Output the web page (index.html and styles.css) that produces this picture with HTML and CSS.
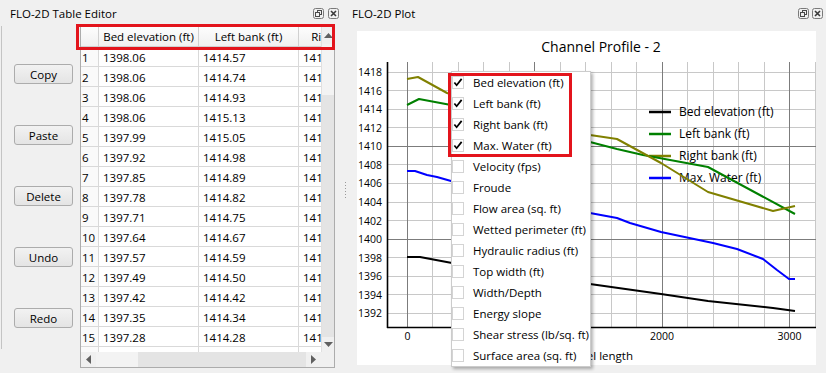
FILE: index.html
```html
<!DOCTYPE html>
<html lang="en">
<head>
  <meta charset="UTF-8">
  <title>FLO-2D Table Editor / Plot</title>
  <link rel="stylesheet" href="styles.css">
</head>
<body>

  <div class="dock dock-table">
    <div class="dock-title">
      <span>FLO-2D Table Editor</span>
      <div class="dock-btns">
        <svg width="11" height="11" viewBox="0 0 11 11"><rect x="0.5" y="0.5" width="10" height="10" rx="2" fill="none" stroke="#7a7a7a"/><rect x="4.5" y="2.5" width="4" height="4" fill="none" stroke="#4a4a4a"/><rect x="2.5" y="4.5" width="4" height="4" fill="#f0f0f0" stroke="#4a4a4a"/></svg>
        <svg width="11" height="11" viewBox="0 0 11 11"><rect x="0.5" y="0.5" width="10" height="10" rx="2" fill="none" stroke="#7a7a7a"/><path d="M3 3L8 8M8 3L3 8" stroke="#3a3a3a" stroke-width="1.6"/></svg>
      </div>
    </div>
    <div class="dock-body">
      <div class="tools">
        <button>Copy</button>
        <button>Paste</button>
        <button>Delete</button>
        <button>Undo</button>
        <button>Redo</button>
      </div>

      <div class="tablebox">
        <div class="viewport">
          <div class="row head">
            <div class="cell"></div>
            <div class="cell">Bed elevation (ft)</div>
            <div class="cell">Left bank (ft)</div>
            <div class="cell">Right bank (ft)</div>
          </div>
          <div class="row"><div class="cell num">1</div><div class="cell">1398.06</div><div class="cell">1414.57</div><div class="cell">1417.27</div></div>
          <div class="row"><div class="cell num">2</div><div class="cell">1398.06</div><div class="cell">1414.74</div><div class="cell">1417.41</div></div>
          <div class="row"><div class="cell num">3</div><div class="cell">1398.06</div><div class="cell">1414.93</div><div class="cell">1417.55</div></div>
          <div class="row"><div class="cell num">4</div><div class="cell">1398.06</div><div class="cell">1415.13</div><div class="cell">1417.68</div></div>
          <div class="row"><div class="cell num">5</div><div class="cell">1397.99</div><div class="cell">1415.05</div><div class="cell">1417.52</div></div>
          <div class="row"><div class="cell num">6</div><div class="cell">1397.92</div><div class="cell">1414.98</div><div class="cell">1417.36</div></div>
          <div class="row"><div class="cell num">7</div><div class="cell">1397.85</div><div class="cell">1414.89</div><div class="cell">1416.98</div></div>
          <div class="row"><div class="cell num">8</div><div class="cell">1397.78</div><div class="cell">1414.82</div><div class="cell">1416.71</div></div>
          <div class="row"><div class="cell num">9</div><div class="cell">1397.71</div><div class="cell">1414.75</div><div class="cell">1416.44</div></div>
          <div class="row"><div class="cell num">10</div><div class="cell">1397.64</div><div class="cell">1414.67</div><div class="cell">1416.17</div></div>
          <div class="row"><div class="cell num">11</div><div class="cell">1397.57</div><div class="cell">1414.59</div><div class="cell">1415.90</div></div>
          <div class="row"><div class="cell num">12</div><div class="cell">1397.49</div><div class="cell">1414.50</div><div class="cell">1415.62</div></div>
          <div class="row"><div class="cell num">13</div><div class="cell">1397.42</div><div class="cell">1414.42</div><div class="cell">1415.35</div></div>
          <div class="row"><div class="cell num">14</div><div class="cell">1397.35</div><div class="cell">1414.34</div><div class="cell">1415.08</div></div>
          <div class="row"><div class="cell num">15</div><div class="cell">1397.28</div><div class="cell">1414.28</div><div class="cell">1414.81</div></div>
          <div class="row"><div class="cell num"></div><div class="cell"></div><div class="cell"></div><div class="cell"></div></div>
        </div>

        <div class="vscroll">
          <div class="sb-btn"><svg width="9" height="5" viewBox="0 0 9 5"><path d="M0 5L4.5 0L9 5Z" fill="#606060"/></svg></div>
          <div class="sb-thumb"></div>
          <div class="sb-track"></div>
          <div class="sb-btn"><svg width="9" height="5" viewBox="0 0 9 5"><path d="M0 0L4.5 5L9 0Z" fill="#606060"/></svg></div>
        </div>
        <div class="hscroll">
          <div class="sb-btn"><svg width="5" height="9" viewBox="0 0 5 9"><path d="M5 0L0 4.5L5 9Z" fill="#606060"/></svg></div>
          <div class="sb-thumb"></div>
          <div class="sb-track"></div>
          <div class="sb-btn"><svg width="5" height="9" viewBox="0 0 5 9"><path d="M0 0L5 4.5L0 9Z" fill="#606060"/></svg></div>
        </div>
        <div class="corner"></div>

        <div class="mark mark-head"></div>
      </div>
    </div>
  </div>

  <div class="splitter"><div class="grip"></div></div>

  <div class="dock dock-plot">
    <div class="dock-title">
      <span>FLO-2D Plot</span>
      <div class="dock-btns">
        <svg width="11" height="11" viewBox="0 0 11 11"><rect x="0.5" y="0.5" width="10" height="10" rx="2" fill="none" stroke="#7a7a7a"/><rect x="4.5" y="2.5" width="4" height="4" fill="none" stroke="#4a4a4a"/><rect x="2.5" y="4.5" width="4" height="4" fill="#f0f0f0" stroke="#4a4a4a"/></svg>
        <svg width="11" height="11" viewBox="0 0 11 11"><rect x="0.5" y="0.5" width="10" height="10" rx="2" fill="none" stroke="#7a7a7a"/><path d="M3 3L8 8M8 3L3 8" stroke="#3a3a3a" stroke-width="1.6"/></svg>
      </div>
    </div>

    <div class="plot">
      <svg class="chart" width="459" height="334" viewBox="0 0 459 334">
        <defs>
          <clipPath id="below-menu"><rect x="234" y="310" width="225" height="24"/></clipPath>
        </defs>
        <text class="title" x="244" y="16" dy=".35em">Channel Profile - 2</text>

        <!-- minor grid -->
        <g stroke="#c8c8c8" stroke-width="1">
          <path d="M75.5 31V296M101.5 31V296M126.5 31V296M152.5 31V296M203.5 31V296M228.5 31V296M254.5 31V296M279.5 31V296M330.5 31V296M356.5 31V296M381.5 31V296M407.5 31V296M458.5 31V296"/>
          <path d="M30 282.5H459M30 263.5H459M30 245.5H459M30 226.5H459M30 189.5H459M30 171.5H459M30 152.5H459M30 133.5H459M30 96.5H459M30 78.5H459M30 59.5H459M30 41.5H459"/>
        </g>
        <!-- major grid -->
        <g stroke="#7c7c7c" stroke-width="1">
          <path d="M50.5 31V296M177.5 31V296M305.5 31V296M432.5 31V296"/>
          <path d="M30 208.5H459M30 115.5H459"/>
        </g>
        <!-- axes -->
        <path d="M30.5 31V297M30 296.5H459" stroke="#000" stroke-width="1.6" fill="none"/>

        <g class="ylab">
          <text x="25" y="41" dy=".35em">1418</text>
          <text x="25" y="60" dy=".35em">1416</text>
          <text x="25" y="78" dy=".35em">1414</text>
          <text x="25" y="97" dy=".35em">1412</text>
          <text x="25" y="115" dy=".35em">1410</text>
          <text x="25" y="134" dy=".35em">1408</text>
          <text x="25" y="152" dy=".35em">1406</text>
          <text x="25" y="171" dy=".35em">1404</text>
          <text x="25" y="190" dy=".35em">1402</text>
          <text x="25" y="208" dy=".35em">1400</text>
          <text x="25" y="227" dy=".35em">1398</text>
          <text x="25" y="245" dy=".35em">1396</text>
          <text x="25" y="264" dy=".35em">1394</text>
          <text x="25" y="282" dy=".35em">1392</text>
        </g>
        <g class="xlab">
          <text x="50.5" y="305" dy=".35em">0</text>
          <text x="305" y="305" dy=".35em">2000</text>
          <text x="432.5" y="305" dy=".35em">3000</text>
        </g>
        <text class="xtitle" x="276" y="325" dy=".35em" clip-path="url(#below-menu)">Channel length</text>

        <!-- legend -->
        <g stroke-width="2.5">
          <path d="M292 81H314" stroke="#000"/>
          <path d="M292 103H314" stroke="#008000"/>
          <path d="M292 125H314" stroke="#808000"/>
          <path d="M292 147H314" stroke="#0000ff"/>
        </g>
        <g class="legend">
          <text x="322" y="81" dy=".35em">Bed elevation (ft)</text>
          <text x="322" y="103" dy=".35em">Left bank (ft)</text>
          <text x="322" y="125" dy=".35em">Right bank (ft)</text>
          <text x="322" y="147" dy=".35em">Max. Water (ft)</text>
        </g>

        <!-- series -->
        <g fill="none" stroke-width="2" stroke-linejoin="round">
          <polyline stroke="#000" points="50,226 63,226 95,232 160,243 233,253 304,263 351,270 416,277 438,280"/>
          <polyline stroke="#008000" points="50,74 62,68 94,74 160,92 233,111 260,118 286,124 351,136 438,183"/>
          <polyline stroke="#808000" points="50,48 61,46 90,62 160,84 233,104 260,108 304,132 351,161 416,180 438,175"/>
          <polyline stroke="#0000ff" points="50,140 58,140 70,144 80,146 94,150 160,166 233,182 260,187 273,192 304,201 356,212 380,218 406,228 420,239 432,248 438,248"/>
        </g>
      </svg>

      <div class="menu">
        <div class="item"><span class="box"><svg width="11" height="11" viewBox="0 0 11 11"><path d="M1.5 5.5L4 8.5L9.5 1.5" fill="none" stroke="#000" stroke-width="1.9"/></svg></span>Bed elevation (ft)</div>
        <div class="item"><span class="box"><svg width="11" height="11" viewBox="0 0 11 11"><path d="M1.5 5.5L4 8.5L9.5 1.5" fill="none" stroke="#000" stroke-width="1.9"/></svg></span>Left bank (ft)</div>
        <div class="item"><span class="box"><svg width="11" height="11" viewBox="0 0 11 11"><path d="M1.5 5.5L4 8.5L9.5 1.5" fill="none" stroke="#000" stroke-width="1.9"/></svg></span>Right bank (ft)</div>
        <div class="item"><span class="box"><svg width="11" height="11" viewBox="0 0 11 11"><path d="M1.5 5.5L4 8.5L9.5 1.5" fill="none" stroke="#000" stroke-width="1.9"/></svg></span>Max. Water (ft)</div>
        <div class="item"><span class="box"></span>Velocity (fps)</div>
        <div class="item"><span class="box"></span>Froude</div>
        <div class="item"><span class="box"></span>Flow area (sq. ft)</div>
        <div class="item"><span class="box"></span>Wetted perimeter (ft)</div>
        <div class="item"><span class="box"></span>Hydraulic radius (ft)</div>
        <div class="item"><span class="box"></span>Top width (ft)</div>
        <div class="item"><span class="box"></span>Width/Depth</div>
        <div class="item"><span class="box"></span>Energy slope</div>
        <div class="item"><span class="box"></span>Shear stress (lb/sq. ft)</div>
        <div class="item"><span class="box"></span>Surface area (sq. ft)</div>
        <div class="mark mark-menu"></div>
      </div>
    </div>
  </div>

</body>
</html>
```

FILE: styles.css
```css
* {
  box-sizing: border-box;
}
body {
  margin: 0;
  width: 826px;
  height: 373px;
  overflow: hidden;
  display: flex;
  background-color: #f0f0f0;
  color: #000;
  font-family: "Open Sans", "Noto Sans", sans-serif;
  font-size: 11.5px;
}
.dock {
  display: flex;
  flex-direction: column;
}
.dock-table {
  width: 340px;
}
.dock-plot {
  flex: 1;
}
.dock-title {
  height: 26px;
  display: flex;
  align-items: center;
  justify-content: space-between;
  padding: 0 1px 0 10px;
}
.dock-plot .dock-title {
  padding: 0 3px 0 2px;
}
.dock-btns {
  display: flex;
  gap: 4px;
}
.dock-plot .dock-btns {
  gap: 3px;
}
.dock-btns svg {
  display: block;
}
.dock-body {
  display: flex;
  flex: 1;
}

/* buttons */
.tools {
  width: 79px;
  height: 323px;
  margin-left: 1px;
  border-left: 1px solid #c4c4c4;
  display: flex;
  flex-direction: column;
  align-items: flex-start;
  gap: 41px;
  padding: 38px 0 0 12px;
}
button {
  width: 59px;
  height: 20px;
  padding: 0;
  font-family: inherit;
  font-size: 11.5px;
  color: #000;
  background: linear-gradient(#f2f2f2, #e4e4e4);
  border: 1px solid #acacac;
  border-radius: 3px;
}

/* table widget */
.tablebox {
  position: relative;
  width: 255px;
  height: 342px;
  border: 1px solid #acacac;
  display: grid;
  grid-template-columns: 240px 13px;
  grid-template-rows: 325px 15px;
  background-color: #fff;
}
.viewport {
  overflow: hidden;
}
.row {
  display: grid;
  grid-template-columns: 18px 100px 100px 100px;
  height: 20px;
}
.cell {
  border-right: 1px solid #d9d9d9;
  border-bottom: 1px solid #d9d9d9;
  padding: 1px 0 0 4px;
  line-height: 19px;
  white-space: nowrap;
  overflow: hidden;
}
.cell.num {
  padding-left: 1px;
  background-color: #fafafa;
}
.head .cell {
  text-align: center;
  padding: 0;
  line-height: 20px;
  background: linear-gradient(#fdfdfd, #f0f0f0);
  border-right-color: #d0d0d0;
  border-bottom-color: #d0d0d0;
}

.vscroll,
.hscroll {
  display: flex;
  background-color: #f0f0f0;
}
.vscroll {
  flex-direction: column;
  border-left: 1px solid #e0e0e0;
}
.sb-btn {
  display: flex;
  align-items: center;
  justify-content: center;
  flex: 0 0 17px;
}
.hscroll .sb-btn {
  flex-basis: 15px;
}
.sb-thumb {
  flex: 0 0 51px;
  background-color: #f3f3f3;
}
.hscroll .sb-thumb {
  flex-basis: 42px;
}
.sb-track {
  flex: 1;
  background-color: #e4e4e4;
}
.vscroll .sb-btn:last-child {
  flex-basis: 15px;
}
.corner {
  background-color: #f0f0f0;
}

/* red highlight frames */
.mark {
  position: absolute;
  border: 3px solid #e3141c;
}
.mark-head {
  left: -5px;
  top: -3px;
  width: 259px;
  height: 26px;
}
.mark-menu {
  left: -4px;
  top: 1px;
  width: 124px;
  height: 84px;
}

/* splitter */
.splitter {
  width: 10px;
  display: flex;
  justify-content: center;
  padding-top: 182px;
}
.grip {
  width: 1px;
  height: 17px;
  background: repeating-linear-gradient(#9a9a9a 0 1px, transparent 1px 3px);
}

/* plot */
.plot {
  position: relative;
  width: 459px;
  height: 334px;
  margin: 5px 10px 0 7px;
  background-color: #fff;
}
.chart {
  display: block;
  font-family: "Open Sans", "Noto Sans", sans-serif;
}
.chart .title {
  font-size: 14px;
  text-anchor: middle;
}
.ylab text {
  font-size: 10.5px;
  text-anchor: end;
}
.xlab text {
  font-size: 10.5px;
  text-anchor: middle;
}
.xtitle {
  font-size: 11.5px;
  text-anchor: end;
}
.legend text {
  font-size: 12px;
}

/* context menu */
.menu {
  position: absolute;
  left: 94px;
  top: 40px;
  width: 140px;
  background-color: #fff;
  border: 1px solid #cccccc;
  box-shadow: 2px 2px 3px rgba(0, 0, 0, 0.3);
}
.item {
  height: 21px;
  display: flex;
  align-items: center;
  white-space: nowrap;
}
.box {
  width: 12px;
  height: 13px;
  margin-right: 9px;
  border: 1px solid #d4d4d4;
  display: flex;
  align-items: center;
  justify-content: center;
}
.box svg {
  display: block;
}
```
